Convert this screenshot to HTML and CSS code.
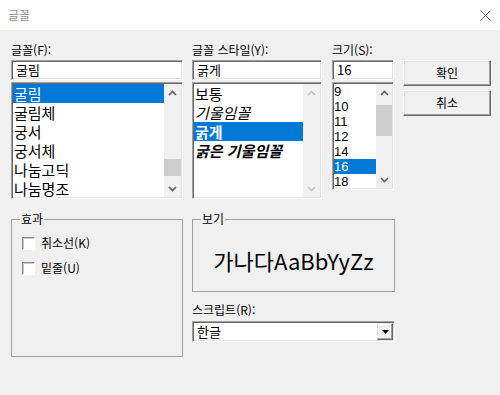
FILE: index.html
```html
<!DOCTYPE html>
<html lang="ko">
<head>
    <meta charset="UTF-8">
    <title>글꼴</title>
    <link rel="stylesheet" href="styles.css">
</head>
<body>
<div class="titlebar">
    <span class="title">글꼴</span>
    <svg class="close" width="11" height="11" viewBox="0 0 11 11">
        <path d="M0.5 0.5 L10.5 10.5 M10.5 0.5 L0.5 10.5" stroke="#777" stroke-width="1" fill="none"/>
    </svg>
</div>
<div class="dialog">
    <div class="top">
        <div class="col col-font">
            <div class="label">글꼴(F):</div>
            <div class="field sunken">굴림</div>
            <div class="list sunken list-font">
                <ul class="items">
                    <li class="sel">굴림</li>
                    <li>굴림체</li>
                    <li>궁서</li>
                    <li>궁서체</li>
                    <li>나눔고딕</li>
                    <li>나눔명조</li>
                </ul>
                <div class="scroll">
                    <div class="arrow"><svg width="9" height="6" viewBox="0 0 9 6"><path d="M1 5 L4.5 1.5 L8 5" stroke="#606060" stroke-width="1.6" fill="none"/></svg></div>
                    <div class="track"><div class="thumb thumb-font"></div></div>
                    <div class="arrow"><svg width="9" height="6" viewBox="0 0 9 6"><path d="M1 1 L4.5 4.5 L8 1" stroke="#606060" stroke-width="1.6" fill="none"/></svg></div>
                </div>
            </div>
        </div>
        <div class="col col-style">
            <div class="label">글꼴 스타일(Y):</div>
            <div class="field sunken">굵게</div>
            <div class="list sunken list-style">
                <ul class="items">
                    <li>보통</li>
                    <li class="it">기울임꼴</li>
                    <li class="sel bd">굵게</li>
                    <li class="it bd">굵은 기울임꼴</li>
                </ul>
                <div class="scroll">
                    <div class="arrow"><svg width="9" height="6" viewBox="0 0 9 6"><path d="M1 5 L4.5 1.5 L8 5" stroke="#c4c4c4" stroke-width="1.6" fill="none"/></svg></div>
                    <div class="track"></div>
                    <div class="arrow"><svg width="9" height="6" viewBox="0 0 9 6"><path d="M1 1 L4.5 4.5 L8 1" stroke="#c4c4c4" stroke-width="1.6" fill="none"/></svg></div>
                </div>
            </div>
        </div>
        <div class="col col-size">
            <div class="label">크기(S):</div>
            <div class="field sunken">16</div>
            <div class="list sunken list-size">
                <ul class="items">
                    <li>9</li>
                    <li>10</li>
                    <li>11</li>
                    <li>12</li>
                    <li>14</li>
                    <li class="sel">16</li>
                    <li>18</li>
                </ul>
                <div class="scroll">
                    <div class="arrow"><svg width="9" height="6" viewBox="0 0 9 6"><path d="M1 5 L4.5 1.5 L8 5" stroke="#606060" stroke-width="1.6" fill="none"/></svg></div>
                    <div class="track"><div class="thumb thumb-size"></div></div>
                    <div class="arrow"><svg width="9" height="6" viewBox="0 0 9 6"><path d="M1 1 L4.5 4.5 L8 1" stroke="#606060" stroke-width="1.6" fill="none"/></svg></div>
                </div>
            </div>
        </div>
        <div class="buttons">
            <div class="btn">확인</div>
            <div class="btn">취소</div>
        </div>
    </div>
    <div class="bottom">
        <fieldset class="group effects">
            <legend>효과</legend>
            <div class="check"><span class="box"></span>취소선(K)</div>
            <div class="check"><span class="box"></span>밑줄(U)</div>
        </fieldset>
        <div class="col-right">
            <fieldset class="group preview">
                <legend>보기</legend>
                <div class="sample">가나다AaBbYyZz</div>
            </fieldset>
            <div class="label label-script">스크립트(R):</div>
            <div class="combo sunken">
                <span class="combo-text">한글</span>
                <span class="drop"><svg width="7" height="4" viewBox="0 0 7 4"><path d="M0 0 L7 0 L3.5 4 Z" fill="#000"/></svg></span>
            </div>
        </div>
    </div>
</div>
</body>
</html>
```

FILE: styles.css
```css
/* reset */
* { box-sizing: border-box; }
body { margin: 0; width: 500px; height: 395px; overflow: hidden; background: #f0f0f0; color: #000; font: 12px/1.2 "Noto Sans CJK KR", "Noto Sans", sans-serif; }
ul { list-style: none; margin: 0; padding: 0; }

/* title bar */
.titlebar {
    height: 30px;
    background: #fff;
    display: flex;
    align-items: center;
    justify-content: space-between;
    padding: 0 9px 0 8px;
}
.title { color: #8c8c8c; font-size: 12px; }

.dialog { padding: 10px 9px 0 11px; }

/* top row */
.top { display: flex; align-items: flex-start; }
.col-font { width: 172px; margin-right: 9px; }
.col-style { width: 130px; margin-right: 10px; }
.col-size { width: 62px; margin-right: 9px; }
.label { height: 20px; line-height: 20px; white-space: nowrap; }

.sunken {
    background: #fff;
    border: 1px solid;
    border-color: #a0a0a0 #fff #fff #a0a0a0;
    box-shadow: inset 1px 1px #696969, inset -1px -1px #e3e3e3;
}
.field {
    height: 20px;
    line-height: 18px;
    padding: 0 4px;
    font-size: 13px;
}

.list { display: flex; margin-top: 2px; padding: 1px; overflow: hidden; }
.list-font, .list-style { height: 117px; }
.list-size { height: 108px; }
.items { flex: 1; overflow: hidden; }
.items li { height: 19px; line-height: 19px; padding-left: 1px; font-size: 15px; white-space: nowrap; }
.list-size .items li { height: 15px; line-height: 15px; font-family: "Liberation Sans", sans-serif; font-size: 13px; padding-left: 0; }
.items li.sel { background: #0078d7; color: #fff; }
.items li.it { font-style: italic; }
.items li.bd { font-weight: bold; }

.scroll { width: 17px; display: flex; flex-direction: column; background: #f0f0f0; }
.list-size .scroll { width: 16px; }
.arrow { height: 17px; display: flex; align-items: center; justify-content: center; }
.track { flex: 1; }
.thumb { background: #cdcdcd; }
.thumb-font { margin-top: 58px; height: 17px; }
.thumb-size { margin-top: 4px; height: 31px; }

/* buttons */
.buttons { width: 88px; padding-top: 20px; display: flex; flex-direction: column; gap: 4px; }
.btn {
    height: 26px;
    line-height: 24px;
    text-align: center;
    background: #f0f0f0;
    border: 1px solid;
    border-color: #fff #696969 #696969 #fff;
    box-shadow: inset -1px -1px #a0a0a0, inset 1px 1px #e3e3e3;
}

/* bottom row */
.bottom { display: flex; align-items: flex-start; margin-top: 13px; }
.group { margin: 0; padding: 0; min-width: 0; border: 1px solid #a0a0a0; }
.group legend { margin-left: 8px; padding: 0 1px; line-height: 14px; font-size: 12px; }

.effects { width: 172px; height: 145px; margin-right: 9px; padding-top: 7px; }
.check { display: flex; align-items: center; height: 20px; padding-left: 10px; margin-bottom: 5px; }
.box {
    width: 13px;
    height: 13px;
    margin-right: 6px;
    background: #fff;
    border: 1px solid;
    border-color: #8a8a8a #fff #fff #8a8a8a;
    box-shadow: inset 1px 1px #c8c8c8;
}

.col-right { width: 203px; }
.preview { height: 80px; display: flex; }
.sample {
    flex: 1;
    height: 64px;
    display: flex;
    align-items: center;
    justify-content: center;
    font-size: 22px;
    padding-top: 4px;
}
.label-script { margin-top: 8px; }
.combo { height: 21px; margin-top: 1px; display: flex; align-items: center; padding: 1px; }
.combo-text { flex: 1; padding-left: 3px; font-size: 13px; }
.drop {
    width: 16px;
    height: 17px;
    display: flex;
    align-items: center;
    justify-content: center;
    background: #f0f0f0;
    border: 1px solid;
    border-color: #e3e3e3 #696969 #696969 #e3e3e3;
    box-shadow: inset -1px -1px #a0a0a0, inset 1px 1px #fff;
}
```
